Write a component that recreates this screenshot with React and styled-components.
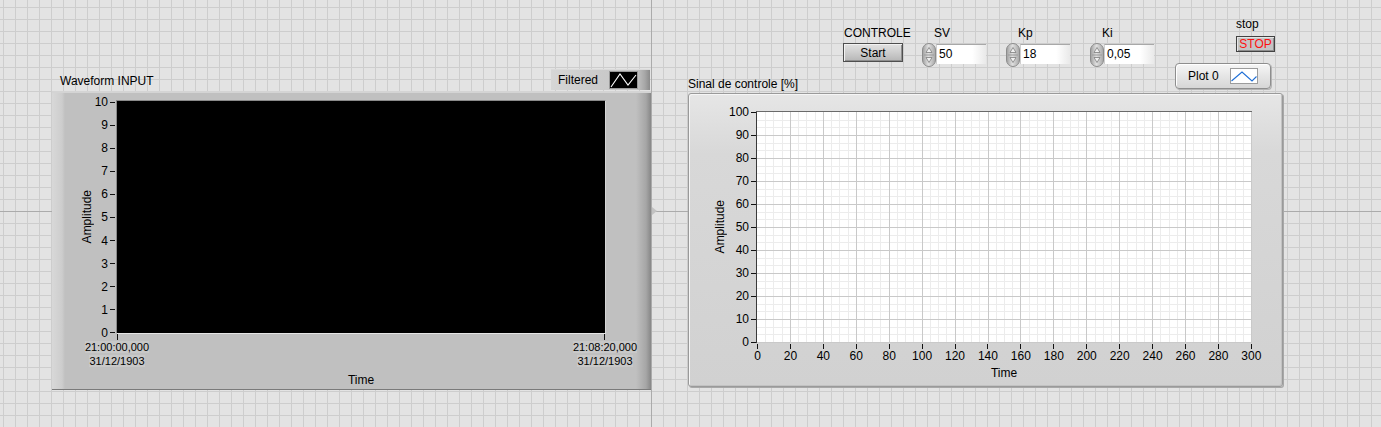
import React from "react";
import styled, { createGlobalStyle } from "styled-components";

const GlobalStyle = createGlobalStyle`
  html, body { margin: 0; padding: 0; }
  body {
    width: 1381px;
    height: 427px;
    overflow: hidden;
    font-family: "Liberation Sans", Arial, sans-serif;
    font-size: 12px;
    color: #000;
    background-color: #e3e3e3;
    background-image:
      linear-gradient(to right, transparent 651px, #ababab 651px, #ababab 652px, transparent 652px),
      linear-gradient(to bottom, transparent 211px, #ababab 211px, #ababab 212px, transparent 212px),
      linear-gradient(to right, #cdcdcd 1px, transparent 1px),
      linear-gradient(to bottom, #cdcdcd 1px, transparent 1px);
    background-size: 100% 100%, 100% 100%, 12px 12px, 12px 12px;
    background-position: 0 0, 0 0, 3px 7px, 3px 7px;
    background-repeat: no-repeat, no-repeat, repeat, repeat;
  }
`;

const Panel = styled.main`
  position: relative;
  box-sizing: border-box;
  height: 427px;
  display: flex;
  align-items: flex-start;
  padding-left: 52px;
`;

// little origin arrow of the front panel grid
const OriginMark = styled.div`
  position: absolute;
  left: 652px;
  top: 207px;
  width: 0;
  height: 0;
  border-left: 5px solid #c2c2c2;
  border-top: 4px solid transparent;
  border-bottom: 4px solid transparent;
`;

const Column = styled.section`
  display: flex;
  flex-direction: column;
  width: ${(p) => p.$width}px;
  margin-top: ${(p) => p.$top}px;
  margin-left: ${(p) => p.$left || 0}px;
`;

const GraphHeader = styled.div`
  display: flex;
  align-items: flex-end;
  justify-content: space-between;
  margin-top: ${(p) => p.$pull || 0}px;
`;

const Caption = styled.div`
  font-size: 12px;
  line-height: 14px;
  white-space: nowrap;
  margin-left: ${(p) => p.$indent || 0}px;
  margin-bottom: ${(p) => p.$lift || 0}px;
`;

/* ---------- legends ---------- */

const FilteredLegend = styled.div`
  box-sizing: border-box;
  width: 99px;
  height: 21px;
  margin: 0 1px 1px 0;
  padding-left: 7px;
  display: flex;
  align-items: center;
  border-top: 1px solid #dadada;
  background: linear-gradient(
    to right,
    #d6d6d6 0,
    #cbcbcb 45%,
    #c6c6c6 86%,
    #a6a6a6 95%,
    #8a8a8a 100%
  );
`;

const PlotLegend = styled.div`
  box-sizing: border-box;
  width: 96px;
  height: 26px;
  margin: 0 12px 2px 0;
  padding-left: 12px;
  display: flex;
  align-items: center;
  border: 1px solid #8e8e8e;
  border-radius: 4px;
  background: linear-gradient(#f6f6f6, #e4e4e4 55%, #d6d6d6);
  box-shadow: inset 1px 1px 0 #ffffff, 1px 1px 0 #b4b4b4;
`;

const LegendName = styled.span`
  font-size: 12px;
  line-height: 14px;
`;

const Swatch = styled.svg`
  display: block;
  margin-left: auto;
  margin-right: ${(p) => p.$right}px;
`;

/* ---------- controls ---------- */

const ControlRow = styled.div`
  display: flex;
  align-items: flex-start;
  height: 50px;
  margin-left: 155px;
`;

const ControlGroup = styled.div`
  display: flex;
  flex-direction: column;
  flex: none;
  width: ${(p) => p.$width}px;
  margin-left: ${(p) => p.$left || 0}px;
  margin-top: ${(p) => p.$top || 0}px;
`;

const ControlLabel = styled.div`
  font-size: 12px;
  line-height: 14px;
  white-space: nowrap;
  margin-left: ${(p) => p.$indent || 0}px;
  margin-bottom: ${(p) => p.$gap}px;
`;

const StartButton = styled.button`
  box-sizing: border-box;
  width: 60px;
  height: 19px;
  padding: 0;
  font-family: inherit;
  font-size: 12px;
  color: #000;
  border: 1px solid #4e4e4e;
  background: linear-gradient(#e2e2e2, #cdcdcd 50%, #b6b6b6);
  box-shadow: inset 1px 1px 0 #f2f2f2, inset -1px -1px 0 #8e8e8e;
`;

const StopButton = styled.button`
  box-sizing: border-box;
  width: 39px;
  height: 16px;
  padding: 0;
  font-family: inherit;
  font-size: 12px;
  line-height: 14px;
  color: #ff1010;
  border: 1px solid #424242;
  background: #c4c4c4;
  box-shadow: inset 1px 1px 0 #e6e6e6, inset -1px -1px 0 #8e8e8e;
`;

const Numeric = styled.div`
  display: flex;
  align-items: flex-start;
`;

const ValueBox = styled.div`
  box-sizing: border-box;
  width: 50px;
  height: 20px;
  margin-top: 1px;
  padding-left: 2px;
  font-size: 12px;
  line-height: 18px;
  border-top: 1px solid #a8a8a8;
  border-left: 1px solid #cfcfcf;
  background: linear-gradient(to right, #ffffff 72%, #e9e9e9);
`;

function Spinner() {
  return (
    <svg width="14" height="24" viewBox="0 0 14 24">
      <defs>
        <linearGradient id="spinFace" x1="0" x2="1">
          <stop offset="0" stopColor="#9e9e9e" />
          <stop offset="0.45" stopColor="#e0e0e0" />
          <stop offset="1" stopColor="#a6a6a6" />
        </linearGradient>
      </defs>
      <rect x="0.5" y="0.5" width="13" height="23" rx="6.5" fill="url(#spinFace)" stroke="#8c8c8c" />
      <line x1="2" y1="12" x2="12" y2="12" stroke="#9a9a9a" />
      <path d="M7 4.5 L10 9.5 L4 9.5 Z" fill="#f0f0f0" stroke="#7e7e7e" strokeWidth="0.8" strokeLinejoin="round" />
      <path d="M7 19.5 L10 14.5 L4 14.5 Z" fill="#f0f0f0" stroke="#7e7e7e" strokeWidth="0.8" strokeLinejoin="round" />
    </svg>
  );
}

function NumericControl({ label, value, left }) {
  return (
    <ControlGroup $width={64} $left={left} $top={9}>
      <ControlLabel $indent={12} $gap={3}>{label}</ControlLabel>
      <Numeric>
        <Spinner />
        <ValueBox>{value}</ValueBox>
      </Numeric>
    </ControlGroup>
  );
}

/* ---------- graphs ---------- */

const AxisTitle = styled.div`
  grid-column: 1;
  grid-row: 1;
  align-self: center;
  justify-self: center;
  writing-mode: vertical-rl;
  transform: rotate(180deg);
  font-size: 12px;
  line-height: 14px;
  white-space: nowrap;
`;

const YLabels = styled.div`
  grid-column: 2;
  grid-row: 1;
  align-self: start;
  display: flex;
  flex-direction: column;
  justify-content: space-between;
  align-items: flex-end;
  height: ${(p) => p.$span + 14}px;
  margin-top: ${(p) => p.$offset}px;
`;

const YTick = styled.div`
  display: flex;
  align-items: center;
  height: 14px;
  font-size: 12px;
  line-height: 14px;
  &::after {
    content: "";
    width: 5px;
    height: 1px;
    margin-left: 2px;
    margin-right: ${(p) => p.$gap}px;
    background: #111;
  }
`;

const TickRow = styled.div`
  grid-column: 3;
  grid-row: 2;
  align-self: start;
  display: flex;
  justify-content: space-between;
  box-sizing: border-box;
  width: ${(p) => p.$width}px;
  height: ${(p) => p.$height}px;
  margin-left: ${(p) => p.$left}px;
  margin-top: ${(p) => p.$top || 0}px;
  padding: 0 ${(p) => p.$inset || 0}px;
`;

const Tick = styled.span`
  width: 1px;
  height: 100%;
  background: #111;
`;

const XLabels = styled.div`
  grid-column: ${(p) => p.$cols};
  grid-row: 3;
  justify-self: start;
  display: flex;
  justify-content: space-between;
  width: ${(p) => p.$width}px;
  margin-left: ${(p) => p.$left}px;
`;

const XLabel = styled.div`
  width: ${(p) => p.$width}px;
  text-align: center;
  font-size: ${(p) => p.$size}px;
  line-height: 14px;
  white-space: nowrap;
`;

const DateText = styled.span`
  background: #c8c8c8;
`;

const XTitle = styled.div`
  grid-column: 3;
  grid-row: 4;
  text-align: center;
  font-size: 12px;
  line-height: 14px;
  padding-top: ${(p) => p.$top}px;
`;

const WaveFrame = styled.div`
  box-sizing: border-box;
  width: 599px;
  height: 299px;
  padding: 7px 0 0 28px;
  display: grid;
  grid-template-columns: 14px 22px 490px;
  grid-template-rows: 234px 6px 28px 19px;
  border-top: 2px solid #d4d4d4;
  border-bottom: 1px solid #7a7a7a;
  background: linear-gradient(
    to right,
    #d8d8d8 0,
    #cdcdcd 10px,
    #c0c0c0 13px,
    #c0c0c0 calc(100% - 15px),
    #a6a6a6 calc(100% - 5px),
    #878787 100%
  );
`;

const BlackPlot = styled.div`
  grid-column: 3;
  grid-row: 1;
  background: #000;
  border-top: 1px solid #8a8a8a;
  border-left: 1px solid #8a8a8a;
  border-right: 1px solid #d6d6d6;
  border-bottom: 1px solid #e6e6e6;
`;

const ChartFrame = styled.div`
  box-sizing: border-box;
  width: 595px;
  height: 294px;
  margin-top: 2px;
  padding: 17px 0 0 24px;
  display: grid;
  grid-template-columns: 14px 29px 496px;
  grid-template-rows: 232px 6px 14px 17px;
  border: 1px solid #9a9a9a;
  border-radius: 3px;
  background: linear-gradient(#e6e6e6 0, #d8d8d8 60px, #d1d1d1 100%);
  box-shadow: inset 1px 1px 0 #f6f6f6, inset -1px -1px 0 #c2c2c2, 1px 1px 0 #a8a8a8;
`;

const WhitePlot = styled.div`
  grid-column: 3;
  grid-row: 1;
  background: #fff;
  border-top: 1px solid #6a6a6a;
  border-left: 1px solid #3a3a3a;
  svg { display: block; }
`;

function PlotGrid({ width, height, xDiv, yDiv, xSub, ySub }) {
  const minor = [];
  const major = [];
  const sx = (width - 1) / xDiv;
  const sy = (height - 1) / yDiv;
  for (let i = 0; i <= xDiv; i++) {
    const x = Math.round(i * sx) + 0.5;
    if (i > 0) major.push(<line key={"vx" + i} x1={x} y1="0" x2={x} y2={height} />);
    if (i < xDiv) {
      for (let k = 1; k < xSub; k++) {
        const mx = Math.round((i + k / xSub) * sx) + 0.5;
        minor.push(<line key={"mx" + i + k} x1={mx} y1="0" x2={mx} y2={height} />);
      }
    }
  }
  for (let j = 0; j <= yDiv; j++) {
    const y = Math.round(j * sy) + 0.5;
    if (j > 0) major.push(<line key={"hy" + j} x1="0" y1={y} x2={width} y2={y} />);
    if (j < yDiv) {
      for (let k = 1; k < ySub; k++) {
        const my = Math.round((j + k / ySub) * sy) + 0.5;
        minor.push(<line key={"my" + j + k} x1="0" y1={my} x2={width} y2={my} />);
      }
    }
  }
  return (
    <svg width={width} height={height} shapeRendering="crispEdges">
      <g stroke="#ececec">{minor}</g>
      <g stroke="#c9c9c9">{major}</g>
    </svg>
  );
}

const waveY = [10, 9, 8, 7, 6, 5, 4, 3, 2, 1, 0];
const controlY = [100, 90, 80, 70, 60, 50, 40, 30, 20, 10, 0];
const controlX = [0, 20, 40, 60, 80, 100, 120, 140, 160, 180, 200, 220, 240, 260, 280, 300];

export default function App() {
  return (
    <>
      <GlobalStyle />
      <Panel>
        <OriginMark />

        <Column $width={599} $top={69}>
          <GraphHeader>
            <Caption $indent={8} $lift={3}>Waveform INPUT</Caption>
            <FilteredLegend>
              <LegendName>Filtered</LegendName>
              <Swatch $right={12} width="29" height="18" viewBox="0 0 29 18">
                <rect x="0" y="0" width="29" height="18" fill="#000" />
                <rect x="0.5" y="0.5" width="28" height="17" fill="none" stroke="#9a9a9a" />
                <polyline points="2,16 11,3 19,14 27,4" fill="none" stroke="#fff" strokeWidth="1.1" />
              </Swatch>
            </FilteredLegend>
          </GraphHeader>
          <WaveFrame>
            <AxisTitle>Amplitude</AxisTitle>
            <YLabels $span={231} $offset={-5}>
              {waveY.map((v) => (
                <YTick key={v} $gap={1}>{v}</YTick>
              ))}
            </YLabels>
            <BlackPlot />
            <TickRow $width={490} $height={6} $left={0} $inset={1}>
              <Tick />
              <Tick />
            </TickRow>
            <XLabels $cols="1 / -1" $width={568} $left={-3}>
              <XLabel $width={80} $size={11}>
                <DateText>21:00:00,000</DateText>
                <br />
                <DateText>31/12/1903</DateText>
              </XLabel>
              <XLabel $width={80} $size={11}>
                <DateText>21:08:20,000</DateText>
                <br />
                <DateText>31/12/1903</DateText>
              </XLabel>
            </XLabels>
            <XTitle $top={5}>Time</XTitle>
          </WaveFrame>
        </Column>

        <Column $width={595} $top={17} $left={37}>
          <ControlRow>
            <ControlGroup $width={60} $top={9}>
              <ControlLabel $indent={1} $gap={3}>CONTROLE</ControlLabel>
              <StartButton>Start</StartButton>
            </ControlGroup>
            <NumericControl label="SV" value="50" left={19} />
            <NumericControl label="Kp" value="18" left={20} />
            <NumericControl label="Ki" value="0,05" left={20} />
            <ControlGroup $width={39} $left={82}>
              <ControlLabel $gap={5}>stop</ControlLabel>
              <StopButton>STOP</StopButton>
            </ControlGroup>
          </ControlRow>
          <GraphHeader $pull={-4}>
            <Caption>Sinal de controle [%]</Caption>
            <PlotLegend>
              <LegendName>Plot 0</LegendName>
              <Swatch $right={12} width="28" height="16" viewBox="0 0 28 16">
                <rect x="0.5" y="0.5" width="27" height="15" fill="#fff" stroke="#9c9c9c" />
                <polyline points="1.5,13 12,4 22,13 26.5,8.5" fill="none" stroke="#1f6fd6" strokeWidth="1.1" />
              </Swatch>
            </PlotLegend>
          </GraphHeader>
          <ChartFrame>
            <AxisTitle>Amplitude</AxisTitle>
            <YLabels $span={230} $offset={-6}>
              {controlY.map((v) => (
                <YTick key={v} $gap={0}>{v}</YTick>
              ))}
            </YLabels>
            <WhitePlot>
              <PlotGrid width={495} height={231} xDiv={15} yDiv={10} xSub={4} ySub={3} />
            </WhitePlot>
            <TickRow $width={495} $height={5} $left={1} $top={1}>
              {controlX.map((v) => (
                <Tick key={v} />
              ))}
            </TickRow>
            <XLabels $cols="3" $width={524} $left={-13.5}>
              {controlX.map((v) => (
                <XLabel key={v} $width={30} $size={12}>{v}</XLabel>
              ))}
            </XLabels>
            <XTitle $top={3}>Time</XTitle>
          </ChartFrame>
        </Column>
      </Panel>
    </>
  );
}
